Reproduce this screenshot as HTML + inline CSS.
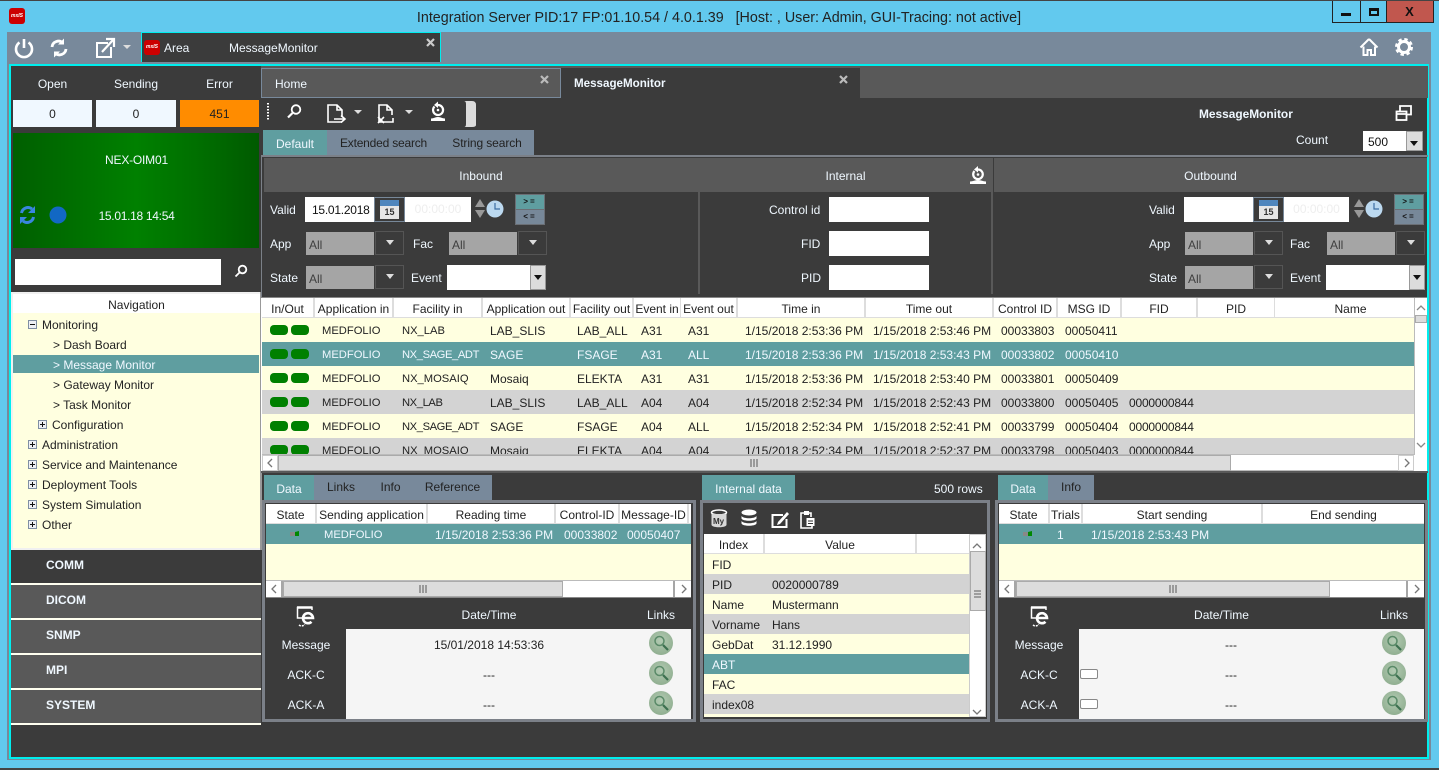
<!DOCTYPE html>
<html><head><meta charset="utf-8"><title>Integration Server</title>
<style>
html,body{margin:0;padding:0}
body{width:1439px;height:770px;overflow:hidden;position:relative;background:#62c9ee;font:12px/16px "Liberation Sans",sans-serif;color:#222}
div,span,svg{position:absolute;white-space:nowrap;box-sizing:border-box}
.l{color:#f0f8ff;height:16px}
.c{text-align:center}
.h{top:0;height:19px;background:#fff;text-align:center;line-height:22px;color:#222}
.hs{background:#ddd}
.r{left:0;height:24px;width:1152px;line-height:26px}
.y{background:#ffffe0}.g{background:#d3d3d3}.t{background:#5f9ea0;color:#f0f8ff}
.r span{top:0}
.r span:nth-of-type(3),.r span:nth-of-type(4){font-size:11.2px}
.p{top:7px;width:18px;height:10px;border-radius:4px;background:#008000}
.w{background:#fff}
.gb{background:#a5a5a5;color:#3f3f3f;height:23px;line-height:27px;padding-left:3px}
.bt{width:29px;height:24px;border:1px solid #555;background:#3b3b3b}
.bt:after{content:"";position:absolute;left:10px;top:8px;border:4px solid transparent;border-top:5px solid #ddd;border-bottom:0;width:0}
.dd{width:16px;height:24px;background:#dcdcdc;border:1px solid #999}
.dd:after{content:"";position:absolute;left:3px;top:9px;border:4px solid transparent;border-top:5px solid #111;border-bottom:0}
.tab{height:25px;line-height:29px;text-align:center}
.m{left:0;height:20px;width:265px;line-height:22px}
.m span{top:0}
.n{left:42px;height:20px;line-height:20px;color:#222}
.bx{width:9px;height:9px;background:#eef0f5;border:1px solid #7f8ea3}
.bx:before{content:"";position:absolute;left:1px;top:3px;width:5px;height:1px;background:#111}
.pl:after{content:"";position:absolute;left:3px;top:1px;width:1px;height:5px;background:#111}
.sb{background:#fff;height:17px;border:1px solid #ccc}
.th{background:#dcdcdc;border:1px solid #aaa}
.pan{border:3px solid #7b8088}
.sq{background:#f5f5f5}
.sc{width:24px;height:24px;border-radius:50%;background:radial-gradient(circle at 50% 40%,#b3cbb3,#86a686)}
.nav{left:11px;width:250px;height:33px;background:#595959;color:#f0f8ff;font-weight:bold;line-height:30px;padding-left:35px}
.ln{left:11px;width:250px;height:2px;background:#fffff0}
.ge{font:bold 8px/16px 'Liberation Mono',monospace;color:#111;letter-spacing:2px}
</style></head><body>

<div style="left:0;top:0;width:1439px;height:1px;background:#444"></div>
<div style="left:0;top:768px;width:1439px;height:2px;background:#444"></div>

<!-- title bar -->
<div style="left:9px;top:8px;width:16px;height:16px;border-radius:3px;background:#c00;color:#fff;font:italic bold 5px/16px 'Liberation Sans',sans-serif;text-align:center">mxIS</div>
<div class="c" style="left:300px;top:9px;width:838px;height:18px;font-size:14.3px;line-height:18px;color:#222;white-space:pre">Integration Server PID:17 FP:01.10.54 / 4.0.1.39   [Host: , User: Admin, GUI-Tracing: not active]</div>

<div style="left:1332px;top:1px;width:102px;height:22px;border:1px solid #222;border-top:0;background:#62c9ee"></div>
<div style="left:1360px;top:1px;width:1px;height:21px;background:#222"></div>
<div style="left:1386px;top:1px;width:1px;height:21px;background:#222"></div>
<div style="left:1387px;top:1px;width:46px;height:21px;background:#c1574e"></div>
<div style="left:1341px;top:13px;width:10px;height:3px;background:#111"></div>
<div style="left:1369px;top:8px;width:10px;height:8px;border:2px solid #111;border-top-width:3px"></div>
<div class="c" style="left:1387px;top:3px;width:45px;height:18px;font:bold 13px/18px 'Liberation Sans',sans-serif;color:#111">X</div>

<!-- top toolbar -->
<div style="left:7px;top:32px;width:1424px;height:728px;background:#78899b"></div>
<div style="left:141px;top:32px;width:300px;height:30px;background:#3b3b3b;border:1px solid #0ee;border-bottom:0"></div>
<svg style="left:14px;top:37px" width="130" height="24" fill="none" stroke="#fff" stroke-width="2.4">
<path d="M5.500 5.500a8 8 0 1 0 9 0M10 2v9" stroke-width="2.6"/>
<path d="M38 10a6.500 6.500 0 0 1 11-4M52 12a6.500 6.500 0 0 1-11 4" stroke-width="2.8"/>
<path d="M50 1.500v6h-6zM40 20.500v-6h6z" fill="#fff" stroke="none"/>
<path d="M94 6h-11v14h14v-10" stroke-width="2"/><path d="M88 15L99 3M92 2h8v8" stroke-width="2.2"/>
<path d="M109 8h8l-4 4z" fill="#ddd" stroke="none"/>
</svg>
<div style="left:144px;top:40px;width:16px;height:15px;border-radius:3px;background:#c00;color:#fff;font:italic bold 5px/15px 'Liberation Sans',sans-serif;text-align:center">mxIS</div>
<div class="l" style="left:164px;top:40px">Area</div>
<div class="l" style="left:229px;top:40px">MessageMonitor</div>
<svg style="left:425px;top:37px" width="11" height="11" stroke="#ccc" stroke-width="2.2"><path d="M2 2l7 7M9 2l-7 7"/></svg>
<svg style="left:1358px;top:37px" width="60" height="20" fill="none" stroke="#fff" stroke-width="2">
<path d="M11 2L2.500 10.500M11 2l8.500 8.500M5.500 9.500v8.500h4v-5h3.500v5h4v-8.500" />
<circle cx="46" cy="10" r="5.500" stroke-width="3"/><circle cx="46" cy="10" r="7.500" stroke-width="3" stroke-dasharray="3.300 2.600"/>
</svg>

<!-- main -->
<div style="left:9px;top:64px;width:1420px;height:695px;background:#3b3b3b;border:2px solid #0ee"></div>

<!-- status -->
<div class="l c" style="left:13px;top:76px;width:79px">Open</div>
<div class="l c" style="left:96px;top:76px;width:80px">Sending</div>
<div class="l c" style="left:180px;top:76px;width:79px">Error</div>
<div class="c" style="left:13px;top:100px;width:79px;height:27px;background:#f0f8ff;line-height:28px">0</div>
<div class="c" style="left:96px;top:100px;width:80px;height:27px;background:#f0f8ff;line-height:28px">0</div>
<div class="c" style="left:180px;top:100px;width:79px;height:27px;background:#ff8c00;line-height:28px">451</div>
<div style="left:13px;top:133px;width:246px;height:115px;background:linear-gradient(90deg,#005f00,#006f00 25%,#008000 50%,#006f00 75%,#005a00)"></div>
<div class="l c" style="left:13px;top:152px;width:246px;padding-left:1px;letter-spacing:-.2px">NEX-OIM01</div>
<div class="l c" style="left:13px;top:208px;width:246px;padding-left:1px;letter-spacing:-.3px">15.01.18 14:54</div>
<svg style="left:19px;top:204px" width="50" height="22" fill="none" stroke="#3a86e0" stroke-width="3">
<path d="M2.500 9a6.500 6.500 0 0 1 10.500-4M14.500 13a6.500 6.500 0 0 1-10.500 4"/><path d="M16 2v7h-7zM1 20v-7h7z" fill="#3a86e0" stroke="none"/>
<circle cx="39" cy="11" r="8.500" fill="#1268c4" stroke="none"/>
</svg>
<div class="w" style="left:15px;top:259px;width:206px;height:26px"></div>
<svg style="left:234px;top:264px" width="14" height="14" fill="none" stroke="#fff" stroke-width="1.800"><circle cx="8.500" cy="5.500" r="3.800"/><path d="M5.500 8.500L1.500 12.500"/></svg>

<!-- tree -->
<div style="left:11px;top:292px;width:250px;height:258px;background:#f0f0f0"></div>
<div class="c" style="left:13px;top:294px;width:247px;height:19px;background:#fff;line-height:22px">Navigation</div>
<div style="left:13px;top:313px;width:247px;height:235px;background:#ffffe0"></div>
<div style="left:260px;top:292px;width:2px;height:258px;background:#999"></div>
<div style="left:13px;top:355px;width:246px;height:18px;background:#5f9ea0"></div>
<span class="bx" style="left:28px;top:320px"></span><div class="n" style="top:315px">Monitoring</div>
<div class="n" style="left:53px;top:335px">&gt; Dash Board</div>
<div class="n" style="left:53px;top:355px;color:#f0f8ff">&gt; Message Monitor</div>
<div class="n" style="left:53px;top:375px">&gt; Gateway Monitor</div>
<div class="n" style="left:53px;top:395px">&gt; Task Monitor</div>
<span class="bx pl" style="left:38px;top:420px"></span><div class="n" style="left:52px;top:415px">Configuration</div>
<span class="bx pl" style="left:28px;top:440px"></span><div class="n" style="top:435px">Administration</div>
<span class="bx pl" style="left:28px;top:460px"></span><div class="n" style="top:455px">Service and Maintenance</div>
<span class="bx pl" style="left:28px;top:480px"></span><div class="n" style="top:475px">Deployment Tools</div>
<span class="bx pl" style="left:28px;top:500px"></span><div class="n" style="top:495px">System Simulation</div>
<span class="bx pl" style="left:28px;top:520px"></span><div class="n" style="top:515px">Other</div>

<div class="nav" style="top:550px;background:#3b3b3b">COMM</div><div class="ln" style="top:583px"></div>
<div class="nav" style="top:585px">DICOM</div><div class="ln" style="top:618px"></div>
<div class="nav" style="top:620px">SNMP</div><div class="ln" style="top:653px"></div>
<div class="nav" style="top:655px">MPI</div><div class="ln" style="top:688px"></div>
<div class="nav" style="top:690px">SYSTEM</div><div class="ln" style="top:723px"></div>

<!-- upper tabs -->
<div style="left:261px;top:66px;width:1167px;height:32px;background:#595959"></div>
<div style="left:261px;top:68px;width:300px;height:30px;background:#595959;border:1px solid #78899b;color:#f0f8ff;line-height:30px;padding-left:13px">Home</div>
<svg style="left:539px;top:74px" width="11" height="11" stroke="#bbb" stroke-width="2.200"><path d="M2 2l7 7M9 2l-7 7"/></svg>
<div style="left:561px;top:68px;width:299px;height:30px;background:#3b3b3b;color:#f0f8ff;font-weight:bold;line-height:32px;padding-left:13px;font-size:11.600px">MessageMonitor</div>
<svg style="left:838px;top:74px" width="11" height="11" stroke="#bbb" stroke-width="2.200"><path d="M2 2l7 7M9 2l-7 7"/></svg>

<!-- monitor toolbar -->
<svg style="left:266px;top:100px" width="212" height="28" fill="none" stroke="#fff" stroke-width="1.800">
<path d="M2 3v18" stroke-width="2" stroke-dasharray="1.500 1.500"/>
<circle cx="30" cy="9.500" r="4.300"/><path d="M26.500 13l-4.500 4.500" stroke-width="2.200"/>
<path d="M76 22h-14v-17h9l5 5v7M71 5v5h5" stroke-width="1.600"/><path d="M68 19h11M75 15.500l4 3.500-4 3.500" stroke-width="1.600"/>
<path d="M88 10h8l-4 4z" fill="#ddd" stroke="none"/>
<path d="M127 18v4h-14v-17h8l5 5v5M121 5v5h5" stroke-width="1.600"/><path d="M112 17l6 6M118 17l-6 6" stroke-width="1.600"/>
<path d="M139 10h8l-4 4z" fill="#ddd" stroke="none"/>
<path d="M168.500 6.500A5 5 0 1 0 172 5" stroke-width="2.200"/><circle cx="172" cy="10" r="1.300" fill="#fff" stroke="none"/>
<path d="M165 21v-2.500c3 0 4-1.500 7-1.500s4 1.500 7 1.500v2.500z" fill="#fff" stroke="none"/>
<path d="M172 1.500l-4 3.500 4 3z" fill="#fff" stroke="none"/>
<path d="M198 1h8q4 0 4 4v20q0 2-4 2h-8q2 0 2-3v-20q0-3-2-3z" fill="#dcdcdc" stroke="none"/>
</svg>
<div style="left:1199px;top:106px;height:16px;color:#f0f8ff;font-weight:bold;font-size:11.900px">MessageMonitor</div>
<svg style="left:1395px;top:104px" width="18" height="18" fill="none" stroke="#fff" stroke-width="1.800"><rect x="1.500" y="7.500" width="10" height="8.500"/><path d="M5 7v-5h11v8.500h-4M1 10h11"/></svg>
<div class="l" style="left:1296px;top:132px">Count</div>
<div class="w" style="left:1363px;top:131px;width:44px;height:20px;padding-left:5px;line-height:22px;color:#111">500</div>
<div class="dd" style="left:1406px;top:131px;height:20px;width:17px"></div>

<!-- search tabs -->
<div class="tab" style="left:263px;top:130px;width:64px;background:#5f9ea0;color:#f0f8ff">Default</div>
<div style="left:327px;top:130px;width:207px;height:25px;background:#78899b"></div>
<div class="tab" style="left:327px;top:129px;width:113px;color:#222;letter-spacing:-.2px">Extended search</div>
<div class="tab" style="left:440px;top:129px;width:94px;color:#222;letter-spacing:-.1px">String search</div>

<!-- filters -->
<div style="left:261px;top:155px;width:1167px;height:2px;background:#7b8088"></div>
<div style="left:261px;top:155px;width:1px;height:142px;background:#7b8088"></div>
<div style="left:698px;top:158px;width:2px;height:136px;background:#595959"></div>
<div style="left:991px;top:158px;width:2px;height:136px;background:#595959"></div>
<div class="c" style="left:264px;top:158px;width:434px;height:34px;background:#595959;color:#f0f8ff;line-height:36px">Inbound</div>
<div class="c" style="left:700px;top:158px;width:291px;height:34px;background:#595959;color:#f0f8ff;line-height:36px">Internal</div>
<div class="c" style="left:994px;top:158px;width:433px;height:34px;background:#595959;color:#f0f8ff;line-height:36px">Outbound</div>
<svg style="left:968px;top:165px" width="20" height="20" fill="none" stroke="#fff"><path d="M6.500 6A4.800 4.800 0 1 0 10 4.500" stroke-width="2.200"/><circle cx="10" cy="9.500" r="1.300" fill="#fff" stroke="none"/><path d="M2 19v-2.500c3 0 5-1.500 8-1.500s5 1.500 8 1.500v2.500z" fill="#fff" stroke="none"/><path d="M10 1l-4 3.500 4 3z" fill="#fff" stroke="none"/></svg>

<div class="l" style="left:270px;top:202px">Valid</div>
<div class="w" style="left:305px;top:197px;width:69px;height:25px;line-height:26px;padding-left:7px;color:#111;letter-spacing:-.25px">15.01.2018</div>
<div style="left:374px;top:197px;width:31px;height:25px;border:1px solid #778899"></div>
<div style="left:380px;top:200px;width:19px;height:19px;background:#e6e6e6"></div><div style="left:380px;top:200px;width:19px;height:6px;background:#4f86bd"></div>
<div class="c" style="left:380px;top:206px;width:19px;height:13px;font:bold 9px/13px 'Liberation Sans',sans-serif;color:#333">15</div>
<div class="w" style="left:405px;top:197px;width:66px;height:25px;line-height:25px;text-align:center;color:#eee">00:00:00</div>
<svg style="left:474px;top:198px" width="32" height="22"><path d="M1 9l5-8 5 8zM1 12h10l-5 8z" fill="#999"/><circle cx="21" cy="11" r="8.500" fill="#bcd9f0"/><path d="M21 5v6h5" stroke="#3d6fa3" stroke-width="1.200" fill="none"/></svg>
<div style="left:515px;top:194px;width:30px;height:31px;background:#6b6f75"></div>
<div class="c ge" style="left:516px;top:195px;width:28px;height:14px;background:#5f9ea0">&gt;=</div>
<div class="c ge" style="left:516px;top:210px;width:28px;height:14px;background:#778899">&lt;=</div>

<div class="l" style="left:270px;top:236px">App</div><div class="gb" style="left:306px;top:232px;width:68px">All</div><div class="bt" style="left:375px;top:231px"></div>
<div class="l" style="left:413px;top:236px">Fac</div><div class="gb" style="left:449px;top:232px;width:68px">All</div><div class="bt" style="left:518px;top:231px"></div>
<div class="l" style="left:270px;top:270px">State</div><div class="gb" style="left:306px;top:266px;width:68px">All</div><div class="bt" style="left:375px;top:265px"></div>
<div class="l" style="left:411px;top:270px">Event</div><div class="w" style="left:447px;top:265px;width:83px;height:25px"></div><div class="dd" style="left:530px;top:265px;height:25px"></div>

<div class="l" style="left:769px;top:202px">Control id</div><div class="w" style="left:829px;top:197px;width:100px;height:25px"></div>
<div class="l" style="left:801px;top:236px">FID</div><div class="w" style="left:829px;top:231px;width:100px;height:25px"></div>
<div class="l" style="left:801px;top:270px">PID</div><div class="w" style="left:829px;top:265px;width:100px;height:25px"></div>

<div class="l" style="left:1149px;top:202px">Valid</div>
<div class="w" style="left:1184px;top:197px;width:69px;height:25px"></div>
<div style="left:1253px;top:197px;width:31px;height:25px;border:1px solid #778899"></div>
<div style="left:1259px;top:200px;width:19px;height:19px;background:#e6e6e6"></div><div style="left:1259px;top:200px;width:19px;height:6px;background:#4f86bd"></div>
<div class="c" style="left:1259px;top:206px;width:19px;height:13px;font:bold 9px/13px 'Liberation Sans',sans-serif;color:#333">15</div>
<div class="w" style="left:1284px;top:197px;width:65px;height:25px;line-height:25px;text-align:center;color:#eee">00:00:00</div>
<svg style="left:1353px;top:198px" width="32" height="22"><path d="M1 9l5-8 5 8zM1 12h10l-5 8z" fill="#999"/><circle cx="21" cy="11" r="8.500" fill="#bcd9f0"/><path d="M21 5v6h5" stroke="#3d6fa3" stroke-width="1.200" fill="none"/></svg>
<div style="left:1394px;top:194px;width:30px;height:31px;background:#6b6f75"></div>
<div class="c ge" style="left:1395px;top:195px;width:28px;height:14px;background:#5f9ea0">&gt;=</div>
<div class="c ge" style="left:1395px;top:210px;width:28px;height:14px;background:#778899">&lt;=</div>
<div class="l" style="left:1149px;top:236px">App</div><div class="gb" style="left:1185px;top:232px;width:68px">All</div><div class="bt" style="left:1254px;top:231px"></div>
<div class="l" style="left:1290px;top:236px">Fac</div><div class="gb" style="left:1327px;top:232px;width:68px">All</div><div class="bt" style="left:1396px;top:231px"></div>
<div class="l" style="left:1149px;top:270px">State</div><div class="gb" style="left:1185px;top:266px;width:68px">All</div><div class="bt" style="left:1254px;top:265px"></div>
<div class="l" style="left:1290px;top:270px">Event</div><div class="w" style="left:1326px;top:265px;width:83px;height:25px"></div><div class="dd" style="left:1409px;top:265px;height:25px"></div>

<!-- main grid -->
<div style="left:261px;top:297px;width:1166px;height:174px;background:#fff;border-top:1px solid #888"></div>
<div class="hs" style="left:262px;top:298px;width:1152px;height:20px">
<div class="h" style="left:0;width:51px">In/Out</div>
<div class="h" style="left:53px;width:77px">Application in</div>
<div class="h" style="left:132px;width:87px">Facility in</div>
<div class="h" style="left:221px;width:86px">Application out</div>
<div class="h" style="left:309px;width:61px">Facility out</div>
<div class="h" style="left:372px;width:46px">Event in</div>
<div class="h" style="left:419px;width:55px">Event out</div>
<div class="h" style="left:476px;width:126px">Time in</div>
<div class="h" style="left:604px;width:126px">Time out</div>
<div class="h" style="left:732px;width:62px">Control ID</div>
<div class="h" style="left:796px;width:62px">MSG ID</div>
<div class="h" style="left:860px;width:74px">FID</div>
<div class="h" style="left:936px;width:76px">PID</div>
<div class="h" style="left:1013px;width:139px;padding-left:12px">Name</div>
</div>
<div style="left:262px;top:318px;width:1152px;height:136px;overflow:hidden">
<div class="r y" style="top:0"><span class="p" style="left:8px;top:7px"></span><span class="p" style="left:29px;top:7px"></span><span style="left:60px">MEDFOLIO</span><span style="left:140px">NX_LAB</span><span style="left:228px">LAB_SLIS</span><span style="left:315px">LAB_ALL</span><span style="left:379px">A31</span><span style="left:426px">A31</span><span style="left:483px">1/15/2018 2:53:36 PM</span><span style="left:611px">1/15/2018 2:53:46 PM</span><span style="left:739px">00033803</span><span style="left:803px">00050411</span></div>
<div class="r t" style="top:24px"><span class="p" style="left:8px;top:7px"></span><span class="p" style="left:29px;top:7px"></span><span style="left:60px">MEDFOLIO</span><span style="left:140px;letter-spacing:-.4px">NX_SAGE_ADT</span><span style="left:228px">SAGE</span><span style="left:315px">FSAGE</span><span style="left:379px">A31</span><span style="left:426px">ALL</span><span style="left:483px">1/15/2018 2:53:36 PM</span><span style="left:611px">1/15/2018 2:53:43 PM</span><span style="left:739px">00033802</span><span style="left:803px">00050410</span></div>
<div class="r y" style="top:48px"><span class="p" style="left:8px;top:7px"></span><span class="p" style="left:29px;top:7px"></span><span style="left:60px">MEDFOLIO</span><span style="left:140px">NX_MOSAIQ</span><span style="left:228px">Mosaiq</span><span style="left:315px">ELEKTA</span><span style="left:379px">A31</span><span style="left:426px">A31</span><span style="left:483px">1/15/2018 2:53:36 PM</span><span style="left:611px">1/15/2018 2:53:40 PM</span><span style="left:739px">00033801</span><span style="left:803px">00050409</span></div>
<div class="r g" style="top:72px"><span class="p" style="left:8px;top:7px"></span><span class="p" style="left:29px;top:7px"></span><span style="left:60px">MEDFOLIO</span><span style="left:140px;letter-spacing:-.4px">NX_LAB</span><span style="left:228px">LAB_SLIS</span><span style="left:315px">LAB_ALL</span><span style="left:379px">A04</span><span style="left:426px">A04</span><span style="left:483px">1/15/2018 2:52:34 PM</span><span style="left:611px">1/15/2018 2:52:43 PM</span><span style="left:739px">00033800</span><span style="left:803px">00050405</span><span style="left:867px;letter-spacing:-.2px">0000000844</span></div>
<div class="r y" style="top:96px"><span class="p" style="left:8px;top:7px"></span><span class="p" style="left:29px;top:7px"></span><span style="left:60px">MEDFOLIO</span><span style="left:140px;letter-spacing:-.4px">NX_SAGE_ADT</span><span style="left:228px">SAGE</span><span style="left:315px">FSAGE</span><span style="left:379px">A04</span><span style="left:426px">ALL</span><span style="left:483px">1/15/2018 2:52:34 PM</span><span style="left:611px">1/15/2018 2:52:41 PM</span><span style="left:739px">00033799</span><span style="left:803px">00050404</span><span style="left:867px;letter-spacing:-.2px">0000000844</span></div>
<div class="r g" style="top:120px"><span class="p" style="left:8px;top:7px"></span><span class="p" style="left:29px;top:7px"></span><span style="left:60px">MEDFOLIO</span><span style="left:140px">NX_MOSAIQ</span><span style="left:228px">Mosaiq</span><span style="left:315px">ELEKTA</span><span style="left:379px">A04</span><span style="left:426px">A04</span><span style="left:483px">1/15/2018 2:52:34 PM</span><span style="left:611px">1/15/2018 2:52:37 PM</span><span style="left:739px">00033798</span><span style="left:803px">00050403</span><span style="left:867px;letter-spacing:-.2px">0000000844</span></div>
</div>
<!-- main scrollbars -->
<div style="left:1414px;top:298px;width:1px;height:157px;background:#bbb"></div>
<div class="th" style="left:1415px;top:315px;width:12px;height:8px"></div>
<svg style="left:1415px;top:300px" width="12" height="150" fill="none" stroke="#888" stroke-width="1.300"><path d="M2 10l4-4 4 4M2 143l4 4 4-4"/></svg>
<div style="left:262px;top:454px;width:1152px;height:1px;background:#bbb"></div>
<div class="th" style="left:278px;top:455px;width:953px;height:16px"></div>
<div style="left:1231px;top:455px;width:168px;height:16px;background:#fff;border-bottom:1px solid #bbb"></div>
<div style="left:1398px;top:455px;width:16px;height:16px;background:#fff;border:1px solid #ccc"></div>
<div style="left:262px;top:455px;width:16px;height:16px;background:#fff;border:1px solid #ccc"></div>
<svg style="left:262px;top:455px" width="1152" height="16" fill="none" stroke="#777" stroke-width="1.300"><path d="M10 4l-4 4 4 4M1143 4l4 4-4 4M489 4v8M492 4v8M495 4v8"/></svg>
<div style="left:261px;top:471px;width:1167px;height:2px;background:#595959"></div>

<!-- bottom left -->
<div class="pan" style="left:262px;top:500px;width:434px;height:222px"></div>
<div class="tab" style="left:264px;top:475px;width:50px;background:#5f9ea0;color:#f0f8ff">Data</div>
<div style="left:314px;top:475px;width:178px;height:25px;background:#78899b"></div>
<div class="tab" style="left:314px;top:473px;width:54px">Links</div>
<div class="tab" style="left:368px;top:473px;width:45px">Info</div>
<div class="tab" style="left:413px;top:473px;width:79px">Reference</div>
<div class="hs" style="left:266px;top:504px;width:425px;height:20px">
<div class="h" style="left:0;width:49px">State</div>
<div class="h" style="left:51px;width:109px">Sending application</div>
<div class="h" style="left:162px;width:126px">Reading time</div>
<div class="h" style="left:290px;width:62px">Control-ID</div>
<div class="h" style="left:354px;width:67px">Message-ID</div>
<div class="h" style="left:423px;width:2px"></div>
</div>
<div style="left:266px;top:524px;width:425px;height:57px;background:#ffffe0"></div>
<div class="t" style="left:266px;top:524px;width:425px;height:20px;line-height:22px">
<svg style="left:24px;top:6px" width="10" height="7"><path d="M0 2h5v4h-5z" fill="#888"/><path d="M5 2l4-1v5h-4z" fill="#080"/></svg>
<span style="left:58px;font-size:11.2px">MEDFOLIO</span><span style="left:169px">1/15/2018 2:53:36 PM</span><span style="left:298px">00033802</span><span style="left:361px">00050407</span></div>
<div style="left:266px;top:580px;width:425px;height:18px;background:#fff;border-top:1px solid #bbb;border-bottom:1px solid #888"></div>
<div class="th" style="left:283px;top:581px;width:280px;height:16px"></div>
<svg style="left:266px;top:581px" width="425" height="16" fill="none" stroke="#777" stroke-width="1.300"><path d="M10 4l-4 4 4 4M416 4l4 4-4 4M16 0v16M408 0v16" /><path d="M154 4v8M157 4v8M160 4v8"/></svg>
<svg style="left:296px;top:605px" width="22" height="22" fill="none" stroke="#fff"><path d="M6 13H1.500V2.500h14.500V5" stroke-width="1.500"/><path d="M1 2.500h15.500" stroke-width="2.500"/><path d="M7 13h10a5 5 0 1 0-1.500 3.800" stroke-width="2.600"/><path d="M3 20c2 1.500 4 1 6-.5" stroke-width="1.500" stroke-dasharray="2 1"/></svg>
<div class="l c" style="left:346px;top:607px;width:286px">Date/Time</div>
<div class="l c" style="left:631px;top:607px;width:60px">Links</div>
<div class="l c" style="left:266px;top:637px;width:80px">Message</div>
<div class="l c" style="left:266px;top:667px;width:80px">ACK-C</div>
<div class="l c" style="left:266px;top:697px;width:80px">ACK-A</div>
<div class="sq" style="left:346px;top:629px;width:345px;height:90px"></div>
<div class="c" style="left:346px;top:637px;width:286px;height:16px">15/01/2018 14:53:36</div>
<div class="c" style="left:346px;top:667px;width:286px;height:16px">---</div>
<div class="c" style="left:346px;top:697px;width:286px;height:16px">---</div>
<div class="sc" style="left:649px;top:631px"><svg width="24" height="24" fill="none" stroke="#5a8a68"><circle cx="10.500" cy="10" r="4.500" stroke-width="1.500"/><path d="M14 14l5 5" stroke="#3d7050" stroke-width="2.200"/></svg></div>
<div class="sc" style="left:649px;top:661px"><svg width="24" height="24" fill="none" stroke="#5a8a68"><circle cx="10.500" cy="10" r="4.500" stroke-width="1.500"/><path d="M14 14l5 5" stroke="#3d7050" stroke-width="2.200"/></svg></div>
<div class="sc" style="left:649px;top:691px"><svg width="24" height="24" fill="none" stroke="#5a8a68"><circle cx="10.500" cy="10" r="4.500" stroke-width="1.500"/><path d="M14 14l5 5" stroke="#3d7050" stroke-width="2.200"/></svg></div>

<!-- bottom middle -->
<div class="pan" style="left:700px;top:500px;width:290px;height:222px"></div>
<div class="tab" style="left:702px;top:475px;width:93px;background:#5f9ea0;color:#f0f8ff">Internal data</div>
<div class="l" style="left:934px;top:481px">500 rows</div>
<svg style="left:708px;top:508px" width="114" height="22" fill="none" stroke="#fff">
<ellipse cx="11" cy="4.500" rx="7.500" ry="2.500" stroke-width="1.500"/><path d="M3.500 6v11c1 3 14 3 15 0v-11z" fill="#d8d8d8" stroke="none"/>
<text x="5" y="16" font-family="Liberation Sans" font-size="8" font-weight="bold" fill="#333" stroke="none">My</text>
<ellipse cx="41" cy="4.500" rx="7.500" ry="3" fill="#fff" stroke="none"/><path d="M33.500 8v2.500c1 3 14 3 15 0v-2.500c-2 3-13 3-15 0zM33.500 13v2.500c1 3 14 3 15 0v-2.500c-2 3-13 3-15 0z" fill="#fff" stroke="none"/>
<path d="M75 7h-10.500v12h14v-8" stroke-width="2"/><path d="M70 14l9-10 2 2-9 10-3 1z" fill="#fff" stroke="none"/>
<path d="M96 5h-3v15h11v-2M103 9v-4h-3" stroke-width="1.600"/><rect x="96" y="3" width="5" height="4" fill="#fff" stroke="none"/><rect x="98.500" y="10" width="8" height="8" fill="#fff" stroke="none"/><path d="M100 13h5M100 15.500h5" stroke="#333"/>
</svg>
<div class="hs" style="left:704px;top:534px;width:265px;height:20px">
<div class="h" style="left:0;width:59px">Index</div>
<div class="h" style="left:61px;width:150px">Value</div>
<div class="h" style="left:213px;width:52px"></div>
</div>
<div class="m y" style="left:704px;top:554px"><span style="left:8px">FID</span></div>
<div class="m g" style="left:704px;top:574px"><span style="left:8px">PID</span><span style="left:68px">0020000789</span></div>
<div class="m y" style="left:704px;top:594px"><span style="left:8px">Name</span><span style="left:68px">Mustermann</span></div>
<div class="m g" style="left:704px;top:614px"><span style="left:8px">Vorname</span><span style="left:68px">Hans</span></div>
<div class="m y" style="left:704px;top:634px"><span style="left:8px">GebDat</span><span style="left:68px">31.12.1990</span></div>
<div class="m t" style="left:704px;top:654px"><span style="left:8px">ABT</span></div>
<div class="m y" style="left:704px;top:674px"><span style="left:8px">FAC</span></div>
<div class="m g" style="left:704px;top:694px"><span style="left:8px">index08</span></div>
<div class="m y" style="left:704px;top:714px;height:3px"></div>
<div style="left:969px;top:534px;width:17px;height:183px;background:#fff;border:1px solid #ccc"></div>
<div class="th" style="left:970px;top:551px;width:16px;height:60px"></div>
<svg style="left:969px;top:534px" width="17" height="183" fill="none" stroke="#777" stroke-width="1.300"><path d="M4 14l4-4 4 4M4 176l4 4 4-4M5 57h7M5 60h7M5 63h7"/></svg>

<!-- bottom right -->
<div class="pan" style="left:995px;top:500px;width:433px;height:222px"></div>
<div class="tab" style="left:998px;top:475px;width:50px;background:#5f9ea0;color:#f0f8ff">Data</div>
<div class="tab" style="left:1048px;top:475px;width:46px;background:#78899b;line-height:25px">Info</div>
<div class="hs" style="left:999px;top:504px;width:425px;height:20px">
<div class="h" style="left:0;width:49px">State</div>
<div class="h" style="left:51px;width:31px">Trials</div>
<div class="h" style="left:84px;width:178px">Start sending</div>
<div class="h" style="left:264px;width:161px">End sending</div>
</div>
<div style="left:999px;top:524px;width:425px;height:57px;background:#ffffe0"></div>
<div class="t" style="left:999px;top:524px;width:425px;height:20px;line-height:22px">
<svg style="left:24px;top:6px" width="10" height="7"><path d="M0 2h5v4h-5z" fill="#888"/><path d="M5 2l4-1v5h-4z" fill="#080"/></svg>
<span style="left:58px">1</span><span style="left:92px">1/15/2018 2:53:43 PM</span></div>
<div style="left:999px;top:580px;width:425px;height:18px;background:#fff;border-top:1px solid #bbb;border-bottom:1px solid #888"></div>
<div class="th" style="left:1016px;top:581px;width:314px;height:16px"></div>
<svg style="left:999px;top:581px" width="425" height="16" fill="none" stroke="#777" stroke-width="1.300"><path d="M10 4l-4 4 4 4M416 4l4 4-4 4M16 0v16M408 0v16"/><path d="M171 4v8M174 4v8M177 4v8"/></svg>
<svg style="left:1030px;top:605px" width="22" height="22" fill="none" stroke="#fff"><path d="M6 13H1.500V2.500h14.500V5" stroke-width="1.500"/><path d="M1 2.500h15.500" stroke-width="2.500"/><path d="M7 13h10a5 5 0 1 0-1.500 3.800" stroke-width="2.600"/><path d="M3 20c2 1.500 4 1 6-.5" stroke-width="1.500" stroke-dasharray="2 1"/></svg>
<div class="l c" style="left:1079px;top:607px;width:285px">Date/Time</div>
<div class="l c" style="left:1364px;top:607px;width:60px">Links</div>
<div class="l c" style="left:999px;top:637px;width:80px">Message</div>
<div class="l c" style="left:999px;top:667px;width:80px">ACK-C</div>
<div class="l c" style="left:999px;top:697px;width:80px">ACK-A</div>
<div class="sq" style="left:1079px;top:629px;width:345px;height:90px"></div>
<div class="c" style="left:1079px;top:637px;width:304px;height:16px">---</div>
<div class="c" style="left:1079px;top:667px;width:304px;height:16px">---</div>
<div class="c" style="left:1079px;top:697px;width:304px;height:16px">---</div>
<div style="left:1080px;top:669px;width:18px;height:10px;background:#fff;border:1px solid #888;border-radius:2px"></div>
<div style="left:1080px;top:699px;width:18px;height:10px;background:#fff;border:1px solid #888;border-radius:2px"></div>
<div class="sc" style="left:1382px;top:631px"><svg width="24" height="24" fill="none" stroke="#5a8a68"><circle cx="10.500" cy="10" r="4.500" stroke-width="1.500"/><path d="M14 14l5 5" stroke="#3d7050" stroke-width="2.200"/></svg></div>
<div class="sc" style="left:1382px;top:661px"><svg width="24" height="24" fill="none" stroke="#5a8a68"><circle cx="10.500" cy="10" r="4.500" stroke-width="1.500"/><path d="M14 14l5 5" stroke="#3d7050" stroke-width="2.200"/></svg></div>
<div class="sc" style="left:1382px;top:691px"><svg width="24" height="24" fill="none" stroke="#5a8a68"><circle cx="10.500" cy="10" r="4.500" stroke-width="1.500"/><path d="M14 14l5 5" stroke="#3d7050" stroke-width="2.200"/></svg></div>

</body></html>
